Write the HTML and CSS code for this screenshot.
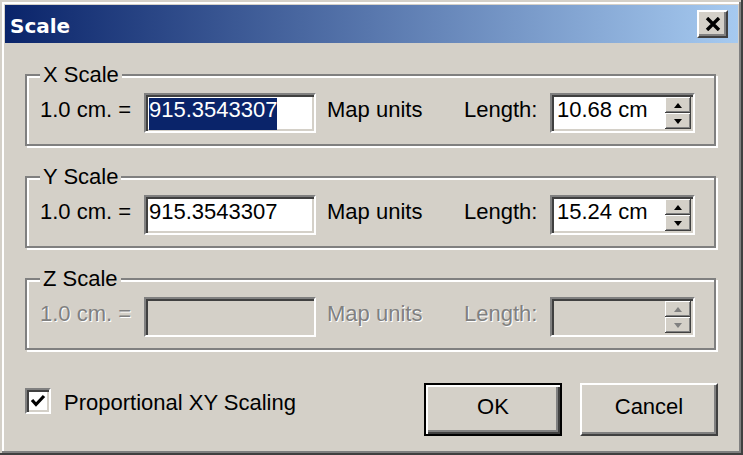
FILE: index.html
```html
<!DOCTYPE html>
<html>
    <head>
        <meta charset="utf-8">
        <title>Scale</title>
        <link rel="stylesheet" href="styles.css">
    </head>
    <body>
        <div class="window">
            <div class="titlebar">
                <span class="title">Scale</span>
                <button class="close" aria-label="Close">
                    <svg width="16" height="14" viewBox="0 0 16 14"><path d="M2 1 L14 13 M14 1 L2 13" stroke="#000" stroke-width="3.4" fill="none"/></svg>
                </button>
            </div>
            <div class="content">
                <fieldset class="group">
                    <legend>X Scale</legend>
                    <div class="row">
                        <span class="lbl cm">1.0 cm. =</span>
                        <div class="edit"><span class="val sel">915.3543307</span></div>
                        <span class="lbl units">Map units</span>
                        <span class="lbl len">Length:</span>
                        <div class="spin">
                            <span class="val">10.68 cm</span>
                            <div class="arrows">
                                <span class="arr"><svg width="8" height="5" viewBox="0 0 8 5"><path d="M0 5 L4 0 L8 5 Z"/></svg></span>
                                <span class="arr"><svg width="8" height="5" viewBox="0 0 8 5"><path d="M0 0 L8 0 L4 5 Z"/></svg></span>
                            </div>
                        </div>
                    </div>
                </fieldset>
                <fieldset class="group">
                    <legend>Y Scale</legend>
                    <div class="row">
                        <span class="lbl cm">1.0 cm. =</span>
                        <div class="edit"><span class="val">915.3543307</span></div>
                        <span class="lbl units">Map units</span>
                        <span class="lbl len">Length:</span>
                        <div class="spin">
                            <span class="val">15.24 cm</span>
                            <div class="arrows">
                                <span class="arr"><svg width="8" height="5" viewBox="0 0 8 5"><path d="M0 5 L4 0 L8 5 Z"/></svg></span>
                                <span class="arr"><svg width="8" height="5" viewBox="0 0 8 5"><path d="M0 0 L8 0 L4 5 Z"/></svg></span>
                            </div>
                        </div>
                    </div>
                </fieldset>
                <fieldset class="group">
                    <legend>Z Scale</legend>
                    <div class="row off">
                        <span class="lbl cm">1.0 cm. =</span>
                        <div class="edit"><span class="val">&nbsp;</span></div>
                        <span class="lbl units">Map units</span>
                        <span class="lbl len">Length:</span>
                        <div class="spin">
                            <span class="val">&nbsp;</span>
                            <div class="arrows">
                                <span class="arr"><svg width="8" height="5" viewBox="0 0 8 5"><path d="M0 5 L4 0 L8 5 Z"/></svg></span>
                                <span class="arr"><svg width="8" height="5" viewBox="0 0 8 5"><path d="M0 0 L8 0 L4 5 Z"/></svg></span>
                            </div>
                        </div>
                    </div>
                </fieldset>
                <div class="footer">
                    <label class="check">
                        <span class="box"><svg width="18" height="18" viewBox="0 0 18 18"><path d="M3 8 L7 12.5 L15 4" stroke="#000" stroke-width="3.2" fill="none"/></svg></span>
                        <span>Proportional XY Scaling</span>
                    </label>
                    <div class="buttons">
                        <button class="btn default">OK</button>
                        <button class="btn">Cancel</button>
                    </div>
                </div>
            </div>
        </div>
    </body>
</html>
```
FILE: styles.css
```css
body{
    margin: 0;
    background: #d4d0c8;
    font-family: "Liberation Sans", Arial, sans-serif;
    font-size: 22px;
    color: #000;
}
.window{
    width: 743px;
    height: 455px;
    box-sizing: border-box;
    padding: 5px;
    background: #d4d0c8;
    box-shadow: inset -2px -2px #404040, inset 2px 2px #d4d0c8, inset -4px -4px #808080, inset 4px 4px #fff;
}

/* title bar */
.titlebar{
    height: 38px;
    display: flex;
    justify-content: space-between;
    align-items: flex-start;
    padding: 0 10px 0 5px;
    background: linear-gradient(to right, #0a246a, #a6caf0);
}
.title{
    font-family: "DejaVu Sans", Tahoma, sans-serif;
    font-weight: bold;
    font-size: 20px;
    line-height: 34px;
    padding-top: 4px;
    color: #fff;
}
.close{
    width: 31px;
    height: 28px;
    margin-top: 5px;
    padding: 0;
    display: flex;
    align-items: center;
    justify-content: center;
    background: #d4d0c8;
    border: 2px solid;
    border-color: #fff #404040 #404040 #fff;
    box-shadow: inset -2px -2px #808080;
}

/* groups */
.content{
    padding: 20px 22px 0 20px;
}
.group{
    margin: 0 0 19px;
    padding: 6px 0 11px 13px;
    border: 2px solid #808080;
    box-shadow: inset 2px 2px #fff, 2px 2px #fff;
}
.group legend{
    padding: 0 3px;
    line-height: 24px;
    background: #d4d0c8;
}
.row{
    display: flex;
    align-items: baseline;
}
.lbl{
    line-height: 24px;
    white-space: nowrap;
}
.lbl.cm{ width: 104px; }
.lbl.units{ width: 137px; margin-left: 11px; }
.lbl.len{ width: 86px; }

.edit, .spin{
    box-sizing: border-box;
    height: 40px;
    background: #fff;
    border: 2px solid;
    border-color: #808080 #fff #fff #808080;
    box-shadow: inset 2px 2px #404040, inset -2px -2px #d4d0c8;
}
.edit{
    width: 172px;
    padding: 3px 0 0 3px;
    line-height: 24px;
}
.val{
    display: inline-block;
    line-height: 24px;
    padding-bottom: 8px;
}
.sel{
    background: #0a246a;
    color: #fff;
}
.spin{
    width: 145px;
    padding: 2px;
    display: flex;
}
.spin .val{
    flex: 1;
    padding: 1px 0 0 3px;
}
.arrows{
    width: 26px;
    display: flex;
    flex-direction: column;
}
.arr{
    flex: 1;
    display: flex;
    align-items: center;
    justify-content: center;
    background: #d4d0c8;
    box-shadow: inset -1px -1px #404040, inset 1px 1px #fff, inset -2px -2px #808080;
}

/* disabled row */
.off .lbl{
    color: #808080;
    text-shadow: 1px 1px #fff;
}
.off .edit, .off .spin{
    background: #d4d0c8;
}
.off .arr svg{
    fill: #808080;
}

/* footer */
.footer{
    display: flex;
    justify-content: space-between;
    align-items: flex-start;
    padding-top: 14px;
    margin-right: -2px;
}
.check{
    display: flex;
    align-items: flex-start;
    gap: 13px;
    margin-top: 5px;
    line-height: 30px;
}
.box{
    box-sizing: border-box;
    width: 26px;
    height: 26px;
    padding: 2px;
    background: #fff;
    border: 2px solid;
    border-color: #808080 #fff #fff #808080;
    box-shadow: inset 2px 2px #404040, inset -2px -2px #d4d0c8;
}
.box svg{
    display: block;
}
.buttons{
    display: flex;
    gap: 18px;
}
.btn{
    box-sizing: border-box;
    width: 138px;
    height: 53px;
    padding: 0 0 5px;
    font: inherit;
    line-height: 24px;
    color: #000;
    background: #d4d0c8;
    border: 2px solid;
    border-color: #fff #404040 #404040 #fff;
    box-shadow: inset -2px -2px #808080;
}
.btn.default{
    border-color: #000;
    box-shadow: inset 2px 2px #fff, inset -2px -2px #404040, inset -4px -4px #808080;
}
```
